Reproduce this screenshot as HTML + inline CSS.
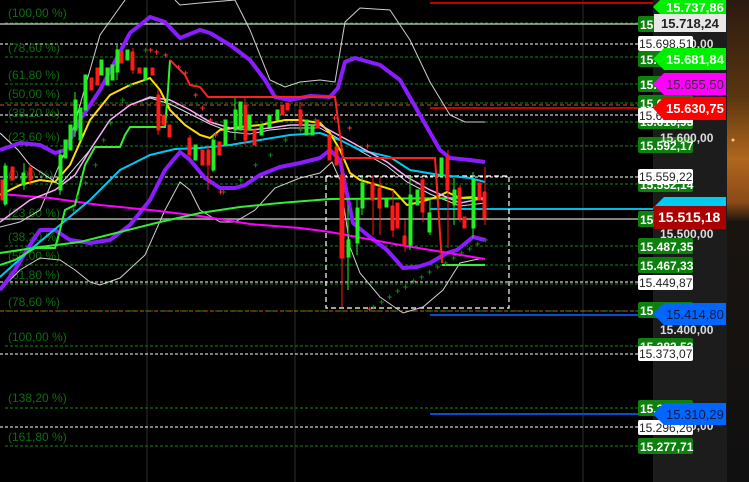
<!DOCTYPE html>
<html><head><meta charset="utf-8"><style>
html,body{margin:0;padding:0;background:#000;width:749px;height:482px;overflow:hidden}
svg{display:block}
text{font-family:"Liberation Sans",sans-serif}
</style></head><body>
<svg width="749" height="482" viewBox="0 0 749 482" xmlns="http://www.w3.org/2000/svg">
<defs>
<linearGradient id="sky" x1="0" y1="0" x2="0" y2="1">
<stop offset="0" stop-color="#2a1a10"/><stop offset="0.2" stop-color="#5a3510"/><stop offset="0.33" stop-color="#b0661e"/><stop offset="0.42" stop-color="#8a4a18"/><stop offset="0.46" stop-color="#1a1410"/><stop offset="1" stop-color="#101010"/>
</linearGradient>
</defs>
<rect x="0" y="0" width="749" height="482" fill="#000"/>
<rect x="653" y="0" width="74" height="482" fill="#1c1c1c"/>
<rect x="727" y="0" width="22" height="482" fill="url(#sky)"/>
<circle cx="733" cy="140" r="1.5" fill="#ffcc66"/>
<g stroke="#2e2e2e" stroke-width="1">
<line x1="147" y1="0" x2="147" y2="482"/><line x1="295" y1="0" x2="295" y2="482"/><line x1="583" y1="0" x2="583" y2="482"/>
</g>
<g stroke="#0f8a0f" stroke-width="1" stroke-dasharray="3,2">
<line x1="5" y1="23" x2="653" y2="23"/><line x1="5" y1="57" x2="653" y2="57"/><line x1="5" y1="84" x2="653" y2="84"/><line x1="5" y1="103" x2="653" y2="103"/><line x1="5" y1="122" x2="653" y2="122"/><line x1="5" y1="146" x2="653" y2="146"/><line x1="5" y1="184" x2="653" y2="184"/><line x1="5" y1="219" x2="653" y2="219"/><line x1="5" y1="246" x2="653" y2="246"/><line x1="5" y1="265" x2="653" y2="265"/><line x1="5" y1="284" x2="653" y2="284"/><line x1="5" y1="311" x2="653" y2="311"/><line x1="5" y1="346" x2="653" y2="346"/><line x1="5" y1="408" x2="653" y2="408"/><line x1="5" y1="446" x2="653" y2="446"/>
</g>
<g stroke="#ffffff" stroke-width="1" stroke-dasharray="3,2">
<line x1="0" y1="44" x2="653" y2="44"/><line x1="0" y1="115" x2="653" y2="115"/><line x1="0" y1="177" x2="653" y2="177"/><line x1="0" y1="282" x2="653" y2="282"/><line x1="0" y1="354" x2="653" y2="354"/><line x1="0" y1="427" x2="653" y2="427"/>
</g>
<g stroke="#b0b0b0" stroke-width="1.5"><line x1="0" y1="24" x2="653" y2="24"/><line x1="0" y1="219" x2="653" y2="219"/></g>
<g stroke="#c06020" stroke-width="1" stroke-dasharray="4,3"><line x1="0" y1="105" x2="653" y2="105"/><line x1="0" y1="311" x2="653" y2="311"/></g>
<line x1="430" y1="3" x2="653" y2="3" stroke="#c00000" stroke-width="2"/>
<line x1="430" y1="108" x2="653" y2="108" stroke="#cc0000" stroke-width="2"/>
<line x1="430" y1="209" x2="653" y2="209" stroke="#00bbdd" stroke-width="2"/>
<line x1="430" y1="315" x2="653" y2="315" stroke="#0050d0" stroke-width="2"/>
<line x1="430" y1="414" x2="653" y2="414" stroke="#0050d0" stroke-width="2"/>
<g fill="#0e6e0e" font-size="12">
<text x="8" y="17">(100,00 %)</text><text x="8" y="52">(78,60 %)</text><text x="8" y="79">(61,80 %)</text><text x="8" y="98">(50,00 %)</text><text x="8" y="117">(38,20 %)</text><text x="8" y="141">(23,60 %)</text><text x="8" y="179">(0,00 %)</text><text x="8" y="217">(23,60 %)</text><text x="8" y="241">(38,20 %)</text><text x="8" y="260">(50,00 %)</text><text x="8" y="279">(61,80 %)</text><text x="8" y="306">(78,60 %)</text><text x="8" y="341">(100,00 %)</text><text x="8" y="402">(138,20 %)</text><text x="8" y="441">(161,80 %)</text>
</g>
<rect x="326" y="176" width="183" height="132" fill="none" stroke="#fff" stroke-width="1.2" stroke-dasharray="5,3"/>
<g fill="none" stroke="#cfcfcf" stroke-width="1">
<polyline points="0,227 20,222 40,210 70,140 100,35 125,0"/>
<polyline points="175,0 180,5 200,3 235,0 250,30 270,80 285,87 300,82 320,80 335,82 345,22 360,8 390,10 410,40 430,82 450,115 465,122 485,122"/>
<polyline points="0,290 20,270 40,258 60,260 75,270 90,282 100,285 120,278 145,255 165,210 180,182 190,190 200,210 220,222 235,222 255,210 275,188 300,178 320,173 332,162 340,180 350,247 360,273 380,297 403,313 423,307 443,290 460,263 483,258"/>
<polyline points="0,133 18,150 30,165 60,185 90,150 110,120 130,105 150,98 170,104 190,114 210,124 230,132 250,134 270,130 290,128 320,128 353,147 387,166 407,182 430,194 460,206 485,203" stroke="#e0e0e0"/>
</g>
<g fill="none" stroke="#8a1cff" stroke-width="4" stroke-linejoin="round">
<polyline points="0,150 20,143 40,145 55,153 65,150 80,120 100,90 130,33 150,17 165,22 180,38 200,30 210,33 230,45 250,60 265,80 275,97 290,100 310,96 330,97 338,88 345,62 355,58 380,65 400,80 420,115 440,150 450,158 470,160 485,162"/>
<polyline points="0,290 15,270 30,245 40,230 55,230 70,240 90,243 110,240 130,225 150,200 165,170 180,152 190,160 205,178 220,188 235,188 245,185 260,175 280,167 300,163 320,158 330,150 340,160 353,223 370,237 387,250 403,268 417,267 430,263 447,253 457,250 473,237 485,240"/>
</g>
<polyline fill="none" stroke="#ff00ff" stroke-width="2" points="0,194 50,198 100,205 150,210 200,216 250,224 300,228 330,232 400,245 485,259"/>
<polyline fill="none" stroke="#33ee33" stroke-width="2" points="0,253 40,247 80,242 120,232 160,222 200,213 240,207 280,203 330,199 485,198"/>
<polyline fill="none" stroke="#00c8f0" stroke-width="2" points="0,277 30,250 60,225 90,200 120,170 150,155 175,149 200,148 230,145 260,140 290,135 320,133 340,140 360,150 390,157 410,170 440,175 470,178 485,182"/>
<polyline fill="none" stroke="#ffdd00" stroke-width="2" points="0,195 20,185 40,180 55,182 70,165 90,120 110,95 130,85 150,78 160,90 170,110 185,125 200,135 210,138 220,130 240,127 260,125 285,120 300,120 320,123 330,133 340,150 350,173 360,180 377,185 393,190 407,205 420,202 437,197 447,192 460,198 473,197 485,200"/>
<polyline fill="none" stroke="#ffaaff" stroke-width="1.5" points="0,222 30,200 55,190 75,175 90,150 110,120 130,105 150,97 170,100 190,110 210,122 230,128 250,130 270,128 290,125 320,125 353,143 387,162 407,177 430,190 460,203 485,198"/>
<polyline fill="none" stroke="#33ee33" stroke-width="2" points="0,265 15,260 35,248 55,248 60,230 65,210 75,205 85,165 95,147 120,147 125,135 130,127 165,127 168,90 170,60"/>
<polyline fill="none" stroke="#ff2020" stroke-width="2" points="170,60 185,75 190,85 200,87 208,97 335,97 343,158 435,158 442,263"/>
<polyline fill="none" stroke="#33ee33" stroke-width="2" points="442,265 485,265"/>
<g fill="#0a8a0a" font-size="9" font-weight="bold">
<text x="71" y="213">+</text><text x="75" y="201">+</text><text x="83" y="186">+</text><text x="93" y="168">+</text><text x="101" y="143">+</text><text x="108" y="126">+</text><text x="120" y="103">+</text><text x="128" y="88">+</text><text x="143" y="53">+</text>
<text x="221" y="195">+</text><text x="238" y="183">+</text><text x="253" y="168">+</text><text x="268" y="158">+</text><text x="283" y="143">+</text><text x="298" y="133">+</text><text x="313" y="123">+</text>
<text x="371" y="310">+</text><text x="379" y="305">+</text><text x="387" y="300">+</text><text x="395" y="294">+</text><text x="403" y="290">+</text><text x="411" y="284">+</text><text x="419" y="280">+</text><text x="427" y="275">+</text><text x="435" y="270">+</text><text x="443" y="266">+</text><text x="451" y="261">+</text><text x="459" y="256">+</text><text x="467" y="252">+</text><text x="475" y="247">+</text><text x="483" y="243">+</text>
</g>
<g fill="#ff3030" font-size="9" font-weight="bold">
<text x="148" y="53">+</text><text x="154" y="55">+</text><text x="163" y="58">+</text><text x="176" y="70">+</text><text x="183" y="76">+</text><text x="193" y="98">+</text><text x="200" y="111">+</text><text x="208" y="123">+</text><text x="213" y="138">+</text><text x="218" y="195">+</text><text x="332" y="121">+</text><text x="347" y="131">+</text><text x="365" y="149">+</text><text x="367" y="312">+</text>
</g>
<g stroke-width="1">
<g fill="#ff1a1a" stroke="#ff1a1a">
<rect x="1" y="180" width="3" height="20"/><rect x="11" y="167" width="3" height="13"/><line x1="30" y1="163" x2="30" y2="185"/><rect x="29" y="168" width="3" height="12"/>
<rect x="90" y="78" width="3" height="12"/><rect x="96" y="68" width="3" height="17"/><rect x="120" y="52" width="3" height="11"/><rect x="131" y="52" width="3" height="18"/><line x1="133" y1="48" x2="133" y2="74"/><rect x="138" y="68" width="3" height="5"/><rect x="151" y="68" width="3" height="7"/>
<line x1="158" y1="90" x2="158" y2="135"/><rect x="157" y="95" width="3" height="35"/><rect x="162" y="115" width="3" height="10"/><rect x="168" y="125" width="3" height="12"/><rect x="188" y="138" width="3" height="17"/><line x1="190" y1="135" x2="190" y2="160"/><rect x="201" y="150" width="3" height="15"/><line x1="208" y1="145" x2="208" y2="190"/><rect x="207" y="150" width="3" height="15"/><rect x="218" y="142" width="3" height="13"/>
<line x1="245" y1="98" x2="245" y2="145"/><rect x="244" y="105" width="3" height="35"/><rect x="253" y="130" width="3" height="15"/><rect x="281" y="105" width="3" height="10"/><rect x="286" y="103" width="3" height="7"/><line x1="300" y1="102" x2="300" y2="130"/><rect x="299" y="110" width="3" height="15"/><rect x="316" y="120" width="3" height="8"/>
<rect x="328" y="135" width="3" height="25"/><rect x="335" y="147" width="3" height="18"/><line x1="342" y1="150" x2="342" y2="307"/><rect x="340" y="175" width="4" height="83"/><rect x="371" y="183" width="3" height="17"/><line x1="373" y1="175" x2="373" y2="235"/><rect x="378" y="188" width="3" height="20"/><line x1="380" y1="178" x2="380" y2="235"/><rect x="391" y="206" width="3" height="24"/><line x1="393" y1="190" x2="393" y2="237"/><rect x="396" y="203" width="3" height="25"/><rect x="403" y="236" width="3" height="9"/><line x1="405" y1="220" x2="405" y2="252"/>
<rect x="421" y="180" width="3" height="32"/><line x1="423" y1="178" x2="423" y2="222"/><line x1="448" y1="150" x2="448" y2="248"/><rect x="446" y="157" width="3" height="33"/><rect x="458" y="188" width="3" height="30"/><line x1="460" y1="185" x2="460" y2="222"/><rect x="463" y="217" width="3" height="11"/><rect x="478" y="183" width="3" height="17"/><line x1="485" y1="167" x2="485" y2="225"/><rect x="483" y="192" width="3" height="26"/>
</g>
<g fill="#22ee22" stroke="#22ee22">
<line x1="5" y1="163" x2="5" y2="206"/><rect x="4" y="166" width="3" height="38"/><rect x="22" y="173" width="3" height="12"/><line x1="24" y1="163" x2="24" y2="190"/>
<line x1="60" y1="150" x2="60" y2="195"/><rect x="59" y="155" width="3" height="35"/><rect x="64" y="140" width="3" height="18"/><rect x="69" y="125" width="3" height="25"/><line x1="75" y1="92" x2="75" y2="137"/><rect x="74" y="100" width="3" height="30"/><rect x="79" y="108" width="3" height="32"/><rect x="84" y="75" width="3" height="35"/>
<rect x="100" y="60" width="3" height="15"/><rect x="106" y="68" width="3" height="17"/><rect x="111" y="65" width="3" height="15"/><line x1="117" y1="45" x2="117" y2="80"/><rect x="116" y="50" width="3" height="22"/><rect x="126" y="50" width="3" height="10"/><rect x="144" y="68" width="3" height="12"/>
<rect x="194" y="145" width="3" height="15"/><line x1="213" y1="135" x2="213" y2="172"/><rect x="212" y="140" width="3" height="30"/><rect x="224" y="120" width="3" height="25"/><line x1="235" y1="98" x2="235" y2="140"/><rect x="234" y="110" width="3" height="20"/><rect x="239" y="102" width="3" height="28"/><rect x="248" y="115" width="3" height="15"/><rect x="260" y="125" width="3" height="10"/><rect x="268" y="115" width="3" height="12"/><rect x="276" y="110" width="3" height="10"/><rect x="305" y="120" width="3" height="15"/><rect x="311" y="125" width="3" height="10"/>
<line x1="348" y1="205" x2="348" y2="290"/><rect x="347" y="240" width="3" height="17"/><line x1="357" y1="198" x2="357" y2="255"/><rect x="356" y="208" width="3" height="35"/><rect x="361" y="183" width="3" height="25"/><line x1="362" y1="175" x2="362" y2="215"/><rect x="385" y="200" width="3" height="7"/><line x1="410" y1="175" x2="410" y2="250"/><rect x="409" y="195" width="3" height="50"/><rect x="416" y="190" width="3" height="15"/><rect x="428" y="213" width="3" height="19"/><line x1="430" y1="198" x2="430" y2="235"/><rect x="440" y="158" width="3" height="18"/><line x1="454" y1="178" x2="454" y2="225"/><rect x="453" y="190" width="3" height="15"/><line x1="473" y1="172" x2="473" y2="238"/><rect x="472" y="180" width="3" height="48"/>
</g>
</g>
<g font-size="12" font-weight="bold">
<g fill="#0d800d">
<rect x="638" y="16" width="55" height="16" rx="2"/><rect x="638" y="51" width="55" height="16" rx="2"/><rect x="638" y="76" width="55" height="16" rx="2"/><rect x="638" y="95" width="55" height="16" rx="2"/><rect x="638" y="113" width="55" height="16" rx="2"/><rect x="638" y="137" width="55" height="16" rx="2"/><rect x="638" y="176" width="55" height="16" rx="2"/><rect x="638" y="211" width="55" height="16" rx="2"/><rect x="638" y="238" width="55" height="16" rx="2"/><rect x="638" y="257" width="55" height="16" rx="2"/><rect x="638" y="302" width="55" height="16" rx="2"/><rect x="638" y="338" width="55" height="16" rx="2"/><rect x="638" y="400" width="55" height="16" rx="2"/><rect x="638" y="438" width="55" height="16" rx="2"/>
</g>
<g fill="#fff">
<text x="640" y="29">15.718,24</text><text x="640" y="64">15.681,84</text><text x="640" y="89">15.655,50</text><text x="640" y="108">15.630,75</text><text x="640" y="126">15.610,93</text><text x="640" y="150">15.592,17</text><text x="640" y="189">15.552,14</text><text x="640" y="224">15.515,18</text><text x="640" y="251">15.487,35</text><text x="640" y="270">15.467,33</text><text x="640" y="315">15.414,80</text><text x="640" y="351">15.382,53</text><text x="640" y="413">15.310,29</text><text x="640" y="451">15.277,71</text>
</g>
<g fill="#dcdcdc"><text x="660" y="48">15.700,00</text><text x="660" y="142">15.600,00</text><text x="660" y="238">15.500,00</text><text x="660" y="334">15.400,00</text><text x="660" y="430">15.300,00</text></g>
<g fill="#fff"><rect x="638" y="36" width="55" height="15" rx="2"/><rect x="638" y="108" width="55" height="15" rx="2"/><rect x="638" y="169" width="55" height="15" rx="2"/><rect x="638" y="275" width="55" height="15" rx="2"/><rect x="638" y="346" width="55" height="15" rx="2"/><rect x="638" y="420" width="55" height="15" rx="2"/></g>
<g fill="#222" font-weight="normal"><text x="639" y="48">15.698,51</text><text x="639" y="120">15.610,93</text><text x="639" y="181">15.559,22</text><text x="639" y="287">15.449,87</text><text x="639" y="358">15.373,07</text><text x="639" y="432">15.296,26</text></g>
</g>
<g font-size="13">
<polygon points="653,7 664,-4 726,-4 726,18 664,18" fill="#00ee00"/><text x="666" y="12" fill="#fff" font-weight="bold">15.737,86</text>
<rect x="654" y="14" width="72" height="18" fill="#e8e8e8"/><text x="661" y="28" fill="#222" font-weight="bold">15.718,24</text>
<polygon points="653,59 664,48 726,48 726,70 664,70" fill="#00ee00"/><text x="666" y="64" fill="#fff" font-weight="bold">15.681,84</text>
<polygon points="653,84 664,73 726,73 726,95 664,95" fill="#ff00ff"/><text x="666" y="89" fill="#333">15.655,50</text>
<polygon points="653,108 664,97 726,97 726,120 664,120" fill="#ff0000"/><text x="666" y="113" fill="#fff" font-weight="bold">15.630,75</text>
<polygon points="653,208 664,197 726,197 726,219 664,219" fill="#00ccf0"/>
<rect x="654" y="206" width="72" height="23" fill="#aa0000"/><text x="658" y="222" fill="#fff" font-weight="bold" font-size="14">15.515,18</text>
<polygon points="653,314 664,303 726,303 726,325 664,325" fill="#0066ff"/><text x="666" y="319" fill="#1a1a40">15.414,80</text>
<polygon points="653,414 664,403 726,403 726,425 664,425" fill="#0066ff"/><text x="666" y="419" fill="#1a1a40">15.310,29</text>
</g>
</svg>
</body></html>
